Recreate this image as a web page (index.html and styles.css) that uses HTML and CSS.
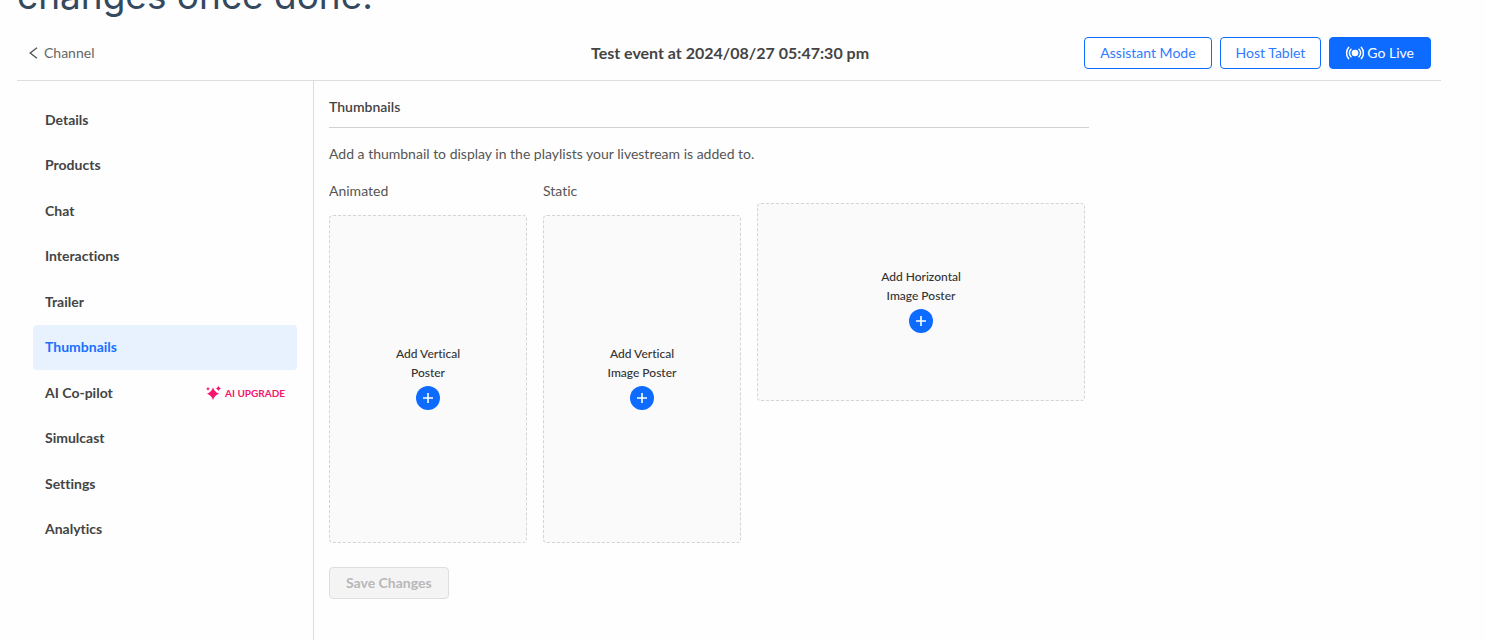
FILE: index.html
```html
<!DOCTYPE html>
<html lang="en">
<head>
<meta charset="utf-8">
<meta name="viewport" content="width=device-width, initial-scale=1">
<title>Thumbnails</title>
<link rel="stylesheet" href="styles.css">
</head>
<body>
<div class="intro"><p class="intro-text">changes once done.</p></div>
<div class="editor">
  <header class="topbar">
    <a class="back" href="#"><svg class="back-icon" viewBox="0 0 9 12" aria-hidden="true"><path d="M8 .8 1.2 6 8 11.2"/></svg>Channel</a>
    <h1 class="title">Test event at 2024/08/27 05:47:30 pm</h1>
    <div class="actions">
      <button class="btn btn-outline" type="button">Assistant Mode</button>
      <button class="btn btn-outline" type="button">Host Tablet</button>
      <button class="btn btn-primary" type="button"><svg class="live-icon" viewBox="0 0 18 14" aria-hidden="true"><circle cx="9" cy="7" r="3.3"/><path d="M5 3.2a5.3 5.3 0 0 0 0 7.6M13 3.2a5.3 5.3 0 0 1 0 7.6M2.6 1.4a8.6 8.6 0 0 0 0 11.2M15.4 1.4a8.6 8.6 0 0 1 0 11.2"/></svg>Go Live</button>
    </div>
  </header>
  <div class="body">
    <nav class="sidebar" aria-label="Event sections">
      <a class="item" href="#">Details</a>
      <a class="item" href="#">Products</a>
      <a class="item" href="#">Chat</a>
      <a class="item" href="#">Interactions</a>
      <a class="item" href="#">Trailer</a>
      <a class="item active" href="#" aria-current="page">Thumbnails</a>
      <a class="item" href="#">AI Co-pilot <span class="upgrade"><svg class="spark" viewBox="0 0 15 14" aria-hidden="true"><path d="M7 1.6Q8.6 6.2 13 7.8 8.6 9.4 7 14 5.4 9.4 1 7.8 5.4 6.2 7 1.6ZM12.4 0Q13 1.8 14.9 2.4 13 3 12.4 4.9 11.8 3 9.9 2.4 11.8 1.8 12.4 0ZM2 .9Q2.5 2.3 3.9 2.8 2.5 3.3 2 4.7 1.5 3.3.1 2.8 1.5 2.3 2 .9Z"/></svg>AI UPGRADE</span></a>
      <a class="item" href="#">Simulcast</a>
      <a class="item" href="#">Settings</a>
      <a class="item" href="#">Analytics</a>
    </nav>
    <main class="content">
      <h2 class="section-title">Thumbnails</h2>
      <p class="hint">Add a thumbnail to display in the playlists your livestream is added to.</p>
      <div class="posters">
        <section class="column">
          <h3 class="label">Animated</h3>
          <button class="poster vertical" type="button"><span>Add Vertical<br>Poster</span><svg class="plus" viewBox="0 0 24 24" aria-hidden="true"><circle cx="12" cy="12" r="12"/><path d="M12 7v10M7 12h10"/></svg></button>
        </section>
        <section class="column">
          <h3 class="label">Static</h3>
          <button class="poster vertical" type="button"><span>Add Vertical<br>Image Poster</span><svg class="plus" viewBox="0 0 24 24" aria-hidden="true"><circle cx="12" cy="12" r="12"/><path d="M12 7v10M7 12h10"/></svg></button>
        </section>
        <section class="column wide">
          <button class="poster horizontal" type="button"><span>Add Horizontal<br>Image Poster</span><svg class="plus" viewBox="0 0 24 24" aria-hidden="true"><circle cx="12" cy="12" r="12"/><path d="M12 7v10M7 12h10"/></svg></button>
        </section>
      </div>
      <button class="save" type="button" disabled>Save Changes</button>
    </main>
  </div>
</div>
</body>
</html>
```
FILE: styles.css
```css
* { box-sizing: border-box; }
html, body { height: 100%; }
body {
  margin: 0;
  display: flex;
  flex-direction: column;
  overflow: hidden;
  background: #fefefe;
  color: #444;
  font: 14px/20px Lato, sans-serif;
  font-variant-ligatures: none;
}
h1, h2, h3, p { margin: 0; }
button { font: inherit; }
a { color: inherit; text-decoration: none; }

.intro {
  display: flex;
  align-items: flex-end;
  flex: none;
  height: 24px;
  padding-left: 17px;
  overflow: hidden;
}
.intro-text {
  color: #34495e;
  font: 37px/56px Inter, sans-serif;
}

.editor {
  flex: 1;
  display: flex;
  flex-direction: column;
  margin: 0 45px 0 17px;
}
.topbar {
  display: grid;
  grid-template-columns: 1fr auto 1fr;
  align-items: center;
  height: 57px;
  padding: 1px 10px 0 12px;
  border-bottom: 1px solid #dedede;
}
.back {
  display: flex;
  align-items: center;
  gap: 6px;
  color: #666;
}
.back-icon {
  width: 9px;
  height: 12px;
  fill: none;
  stroke: #555;
  stroke-width: 1.4;
}
.title { font-size: 16px; font-weight: 700; }
.actions {
  display: flex;
  justify-content: flex-end;
  gap: 8px;
}
.btn {
  display: flex;
  align-items: center;
  height: 32px;
  padding: 0 15px;
  border: 1px solid #0d6bff;
  border-radius: 4px;
  white-space: nowrap;
}
.btn-outline { background: #fff; color: #2f7bff; }
.btn-primary { background: #0d6bff; color: #fff; gap: 3px; padding: 0 16px; }
.live-icon { width: 18px; height: 14px; fill: #fff; }
.live-icon path { fill: none; stroke: #fff; stroke-width: 1.5; stroke-linecap: round; }

.body { flex: 1; display: flex; }
.sidebar {
  flex: none;
  display: grid;
  grid-template-rows: repeat(10, 1fr);
  width: 297px;
  padding: 16px 16px 88px;
  border-right: 1px solid #dedede;
}
.item {
  display: flex;
  align-items: center;
  justify-content: space-between;
  padding: 0 12px;
  border-radius: 4px;
  font-weight: 700;
}
.active { background: #e8f2ff; color: #1a70ff; }
.upgrade {
  display: flex;
  align-items: center;
  gap: 4px;
  color: #f5146e;
  font-size: 10px;
}
.spark { width: 15px; height: 14px; fill: #f5146e; }

.content { flex: 1; padding: 16px 15px 0; }
.section-title {
  max-width: 760px;
  padding-bottom: 10px;
  border-bottom: 1px solid #d2d2d2;
  font-size: 14px;
  font-weight: 600;
}
.hint { margin-top: 16px; color: #555; }
.posters {
  display: flex;
  align-items: flex-start;
  gap: 16px;
  margin-top: 17px;
}
.label {
  margin-bottom: 14px;
  color: #555;
  font-size: 14px;
  font-weight: 400;
}
.wide { padding-top: 22px; }
.poster {
  display: flex;
  flex-direction: column;
  align-items: center;
  justify-content: center;
  gap: 4px;
  padding: 0 0 5px;
  border: 1px dashed #d4d4d4;
  border-radius: 4px;
  background: #fafafa;
  color: #333;
  font-size: 12px;
  font-weight: 500;
  line-height: 19px;
}
.vertical { width: 198px; height: 328px; }
.horizontal { width: 328px; height: 198px; }
.plus { width: 24px; height: 24px; fill: #0d6bff; }
.plus path { stroke: #fff; stroke-width: 1.6; }
.save {
  height: 32px;
  margin-top: 24px;
  padding: 0 16px;
  border: 1px solid #dedede;
  border-radius: 4px;
  background: #f4f4f4;
  color: #b8b8b8;
  font-weight: 700;
}
```
